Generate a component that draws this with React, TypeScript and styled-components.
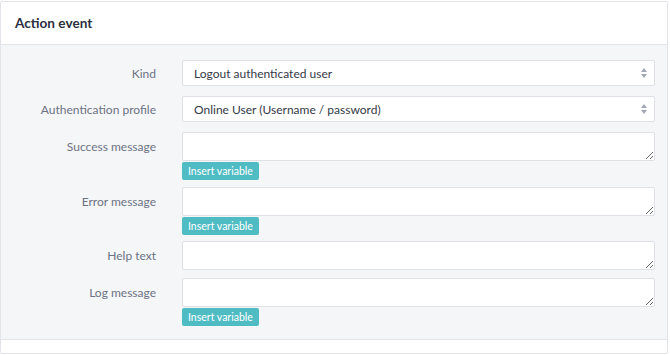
import styled, { createGlobalStyle } from 'styled-components';

const GlobalStyle = createGlobalStyle`
  html, body {
    margin: 0;
    padding: 0;
    background: #ffffff;
  }
  body {
    font-family: Lato, 'Open Sans', sans-serif;
  }
`;

const StyledCard = styled.div`
  margin-top: 1px;
  width: 668px;
  border: 1px solid #e2e4e9;
  border-radius: 2px;
  background: #ffffff;
  box-sizing: border-box;
`;

const StyledHeader = styled.div`
  display: flex;
  align-items: center;
  height: 42px;
  padding: 0 14px;
  border-bottom: 1px solid #e2e4e9;
  font-size: 13.6px;
  font-weight: 700;
  color: #2c3040;
`;

const StyledBody = styled.div`
  display: flex;
  flex-direction: column;
  background: #f5f6f8;
  padding: 15px 12px 13px 0;
  border-bottom: 1px solid #e2e4e9;
`;

const StyledFooter = styled.div`
  height: 13px;
`;

const StyledRow = styled.div<{ $gap: number }>`
  display: grid;
  grid-template-columns: 155px 1fr;
  column-gap: 26px;
  margin-bottom: ${(p) => p.$gap}px;

  &:last-child {
    margin-bottom: 0;
  }
`;

const StyledLabel = styled.label<{ $height: number }>`
  display: flex;
  align-items: center;
  justify-content: flex-end;
  height: ${(p) => p.$height}px;
  font-size: 12px;
  color: #6c7283;
`;

const StyledField = styled.div`
  display: flex;
  flex-direction: column;
  align-items: flex-start;
`;

const StyledSelect = styled.div`
  position: relative;
  display: flex;
  align-items: center;
  width: 100%;
  height: 26px;
  box-sizing: border-box;
  padding: 0 11px;
  background: #ffffff;
  border: 1px solid #dfe1e6;
  border-radius: 2px;
  font-size: 12px;
  color: #353946;
`;

const StyledArrows = styled.svg`
  position: absolute;
  right: 6px;
  top: 50%;
  transform: translateY(-50%);
`;

const StyledTextarea = styled.textarea`
  display: block;
  width: 100%;
  height: 29px;
  box-sizing: border-box;
  margin: 0;
  background: #ffffff;
  border: 1px solid #dfe1e6;
  border-radius: 2px;
  font-family: inherit;
  font-size: 12px;
  resize: vertical;
  outline: none;
`;

const StyledInsertButton = styled.button`
  margin-top: 1px;
  height: 18px;
  padding: 0 6px;
  border: none;
  border-radius: 2px;
  background: #4fbcc4;
  color: #ffffff;
  font-family: inherit;
  font-size: 10.5px;
  line-height: 18px;
  cursor: pointer;
`;

const SelectArrows = () => (
  <StyledArrows width="8" height="12" viewBox="0 0 8 12">
    <path d="M4 1 L7 5 L1 5 Z" fill="#a3a8b4" />
    <path d="M4 11 L7 7 L1 7 Z" fill="#a3a8b4" />
  </StyledArrows>
);

interface FieldDef {
  label: string;
  kind: 'select' | 'textarea';
  value?: string;
  insert?: boolean;
  gap: number;
}

const fields: FieldDef[] = [
  { label: 'Kind', kind: 'select', value: 'Logout authenticated user', gap: 10 },
  {
    label: 'Authentication profile',
    kind: 'select',
    value: 'Online User (Username / password)',
    gap: 10,
  },
  { label: 'Success message', kind: 'textarea', insert: true, gap: 7 },
  { label: 'Error message', kind: 'textarea', insert: true, gap: 6 },
  { label: 'Help text', kind: 'textarea', gap: 8 },
  { label: 'Log message', kind: 'textarea', insert: true, gap: 0 },
];

const App = () => {
  return (
    <>
      <GlobalStyle />
      <StyledCard>
        <StyledHeader>Action event</StyledHeader>
        <StyledBody>
          {fields.map((field) => (
            <StyledRow key={field.label} $gap={field.gap}>
              <StyledLabel $height={field.kind === 'select' ? 26 : 29}>
                {field.label}
              </StyledLabel>
              <StyledField>
                {field.kind === 'select' ? (
                  <StyledSelect>
                    {field.value}
                    <SelectArrows />
                  </StyledSelect>
                ) : (
                  <StyledTextarea />
                )}
                {field.insert && (
                  <StyledInsertButton>Insert variable</StyledInsertButton>
                )}
              </StyledField>
            </StyledRow>
          ))}
        </StyledBody>
        <StyledFooter />
      </StyledCard>
    </>
  );
};

export default App;
